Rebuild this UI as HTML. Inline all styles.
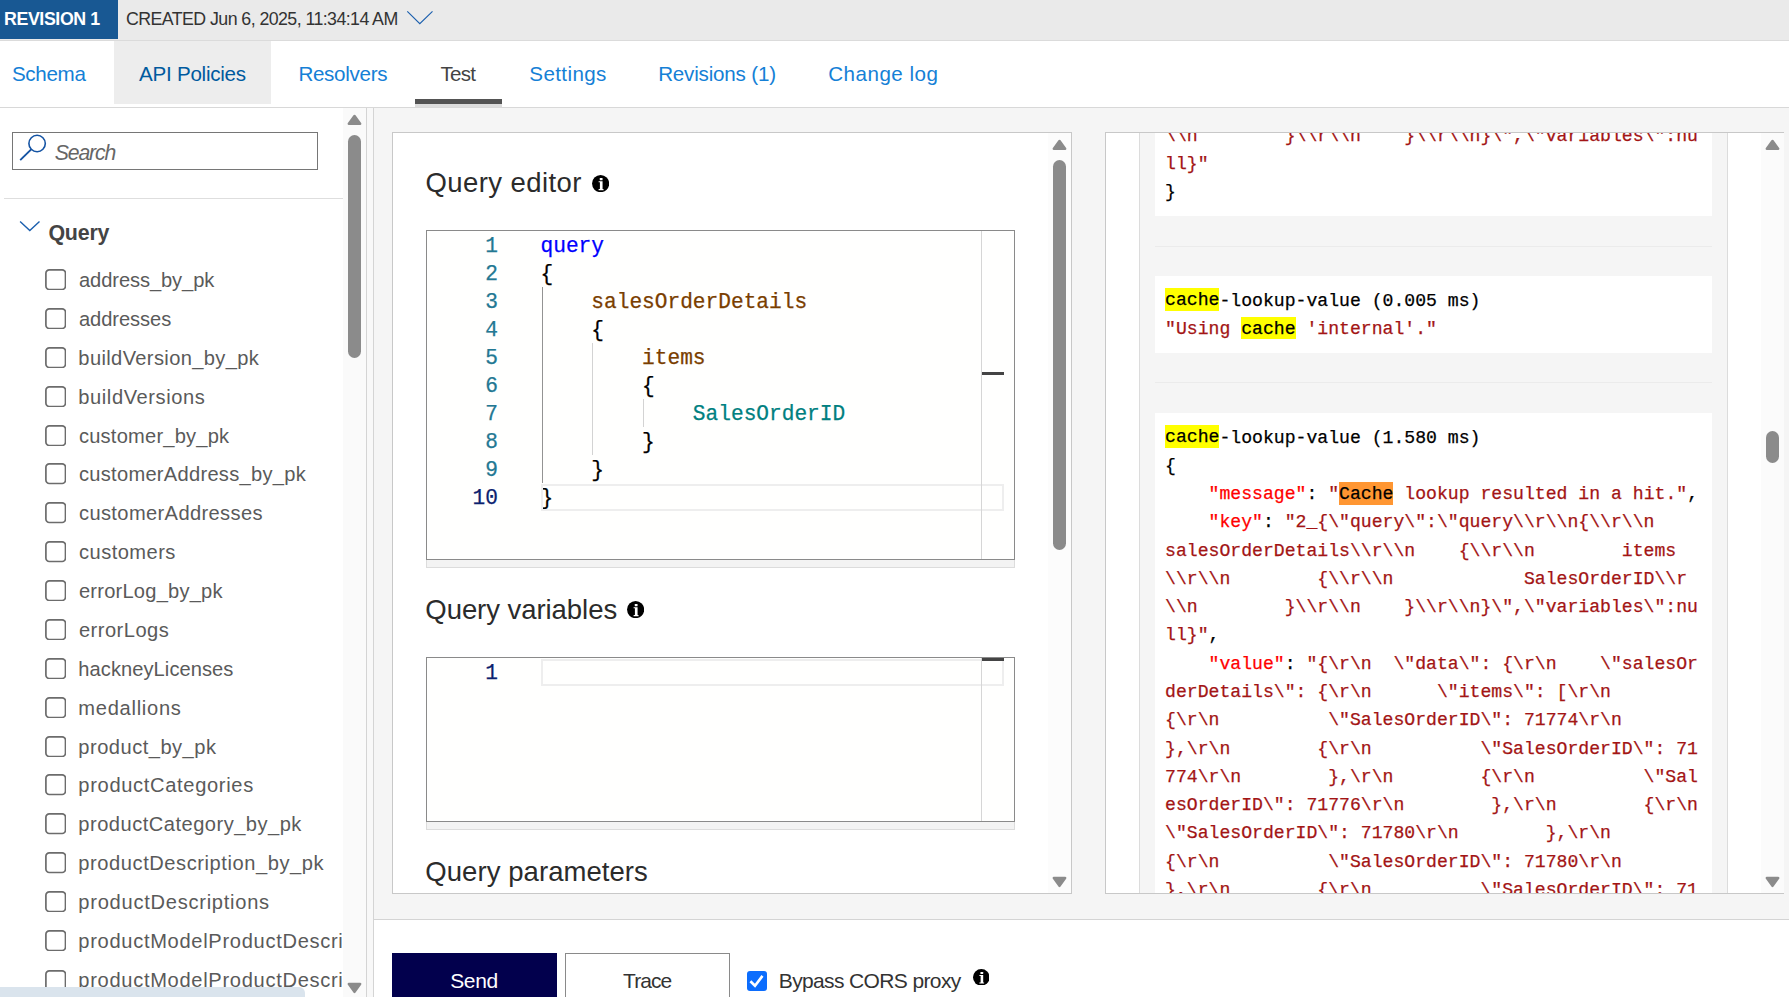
<!DOCTYPE html><html lang="en"><head><meta charset="utf-8"><title>API Management - Test</title><style>
*{box-sizing:border-box;margin:0;padding:0}
html,body{width:1789px;height:997px;overflow:hidden;background:#fff;font-family:"Liberation Sans",sans-serif}
body{position:relative}
.t{position:absolute;white-space:pre;display:block}
.abs{position:absolute}
#revbar{position:absolute;left:0;top:0;width:1789px;height:41px;background:#eaeaea;border-bottom:1px solid #dbdbdb}
#revbar .badge{position:absolute;left:0;top:0;width:118px;height:39px;background:#185893}
#tabs{position:absolute;left:0;top:41px;width:1789px;height:67px;background:#fff;border-bottom:1px solid #d8d8d8}
#tabs .hover{position:absolute;left:114px;top:0;width:157px;height:62.5px;background:#ededed}
#tabs .sel{position:absolute;left:415px;top:58px;width:87px;height:5px;background:#535353}
#tabs .sel2{position:absolute;left:415px;top:63px;width:87px;height:3px;background:#dcdcdc}
#sidebar{position:absolute;left:0;top:108px;width:343px;height:889px;background:#fff;overflow:hidden}
#sbscroll{position:absolute;left:343px;top:108px;width:23px;height:889px;background:#fafafa}
.thumb{position:absolute;background:#8b8b8b;border-radius:7px}
.vline{position:absolute;width:1px;background:#d4d4d4}
#gutter{position:absolute;left:367px;top:108px;width:6px;height:889px;background:#f8f8f8}
#main{position:absolute;left:374px;top:108px;width:1415px;height:812px;background:#f5f5f5;border-bottom:1px solid #d4d4d4;overflow:hidden}
#actions{position:absolute;left:374px;top:920px;width:1415px;height:77px;background:#fff}
.card{position:absolute;background:#fff;border:1px solid #c8c8c8;overflow:hidden}
.cb{position:absolute}
.editor{position:absolute;background:#fffffe;border:1px solid #8a8a8a;overflow:hidden}
.grip{position:absolute;height:8px;background:#f3f3f3;border:1px solid #dcdcdc;border-top:none}
.code{position:absolute;font:400 21.17px/28px "Liberation Mono",monospace;white-space:pre;color:#000;-webkit-text-stroke:0.25px}
.ln{position:absolute;font:400 21.17px/28px "Liberation Mono",monospace;white-space:pre;color:#237893;text-align:right;-webkit-text-stroke:0.25px}
.guide{position:absolute;width:1px;background:#d3d3d3}
.guide.act{background:#939393}
.curline{position:absolute;border:2px solid #eeeeee}
.blk{position:absolute;left:49px;width:557px;background:#fff;padding:10.5px 0 9.5px 10px;font:400 18.14px/28.28px "Liberation Mono",monospace;white-space:pre;color:#000;overflow:hidden;-webkit-text-stroke:0.25px}
.blk .s{color:#a31515}.blk .k{color:#ff0000}
mark{background:#ffff00;color:#000;padding:2.2px 0 0.7px}
mark.cur{background:#ff9632}
.sep{position:absolute;left:49px;width:557px;height:1px;background:#ebebeb}
.info{position:absolute;width:17px;height:17px}
</style></head><body>
<header id="revbar"><div class="badge"></div>
<span class="t" style="left:3.99px;top:7.00px;font:normal 700 17.80px/24px 'Liberation Sans', sans-serif;letter-spacing:-0.395px;color:#fff">REVISION 1</span>
<span class="t" style="left:125.97px;top:7.00px;font:normal 400 17.80px/24px 'Liberation Sans', sans-serif;letter-spacing:-0.570px;color:#333">CREATED Jun 6, 2025, 11:34:14 AM</span>
<svg class="abs" style="left:406px;top:8px" width="30" height="20" viewBox="0 0 30 20"><path d="M1.3 3.3 L13.8 15.6 L26.5 3.3" fill="none" stroke="#1b5fae" stroke-width="1.15"/></svg>
</header>
<nav id="tabs"><div class="hover"></div><div class="sel"></div><div class="sel2"></div>
<a class="t" style="left:11.96px;top:19.00px;font:normal 400 20.60px/27px 'Liberation Sans', sans-serif;letter-spacing:-0.331px;color:#1580d6">Schema</a>
<a class="t" style="left:139.00px;top:19.00px;font:normal 400 20.60px/27px 'Liberation Sans', sans-serif;letter-spacing:-0.252px;color:#005a9e">API Policies</a>
<a class="t" style="left:298.39px;top:19.00px;font:normal 400 20.60px/27px 'Liberation Sans', sans-serif;letter-spacing:-0.291px;color:#1580d6">Resolvers</a>
<a class="t" style="left:440.38px;top:19.00px;font:normal 400 20.60px/27px 'Liberation Sans', sans-serif;letter-spacing:-0.743px;color:#444">Test</a>
<a class="t" style="left:529.36px;top:19.00px;font:normal 400 20.60px/27px 'Liberation Sans', sans-serif;letter-spacing:0.365px;color:#1580d6">Settings</a>
<a class="t" style="left:658.19px;top:19.00px;font:normal 400 20.60px/27px 'Liberation Sans', sans-serif;letter-spacing:-0.194px;color:#1580d6">Revisions (1)</a>
<a class="t" style="left:828.23px;top:19.00px;font:normal 400 20.60px/27px 'Liberation Sans', sans-serif;letter-spacing:0.483px;color:#1580d6">Change log</a>
</nav>
<aside id="sidebar">
<div class="abs" style="left:12px;top:24px;width:306px;height:38px;border:1px solid #767676;background:#fff"></div>
<svg class="abs" style="left:18px;top:25px" width="30" height="30" viewBox="0 0 30 30"><circle cx="19.1" cy="10.5" r="8.2" fill="none" stroke="#1453a3" stroke-width="1.6"/><path d="M13.2 16.3 L2.2 27.2" stroke="#1453a3" stroke-width="1.9" fill="none"/></svg>
<span class="t" style="left:54.77px;top:31.00px;font:italic 400 21.20px/28px 'Liberation Sans', sans-serif;letter-spacing:-1.136px;color:#666">Search</span>
<div class="abs" style="left:4px;top:90px;width:339px;height:1px;background:#dedede"></div>
<svg class="abs" style="left:17px;top:110px" width="26" height="16" viewBox="0 0 26 16"><path d="M3.1 3.4 L12.8 12.6 L22.5 3.4" fill="none" stroke="#1b5fae" stroke-width="1.4"/></svg>
<h3 class="t" style="left:48.43px;top:111.00px;font:normal 700 21.40px/28px 'Liberation Sans', sans-serif;letter-spacing:-0.204px;color:#444">Query</h3>
<svg class="cb" style="left:45px;top:161.00px" width="21.4" height="21.4" viewBox="0 0 21.4 21.4"><rect x=".9" y=".9" width="19.6" height="19.6" rx="3.4" fill="#fff" stroke="#6c6c6c" stroke-width="1.7"/></svg>
<label class="t" style="left:78.97px;top:159.00px;font:normal 400 20.10px/26px 'Liberation Sans', sans-serif;letter-spacing:-0.076px;color:#5a5a5a">address_by_pk</label>
<svg class="cb" style="left:45px;top:199.88px" width="21.4" height="21.4" viewBox="0 0 21.4 21.4"><rect x=".9" y=".9" width="19.6" height="19.6" rx="3.4" fill="#fff" stroke="#6c6c6c" stroke-width="1.7"/></svg>
<label class="t" style="left:78.97px;top:198.00px;font:normal 400 20.10px/26px 'Liberation Sans', sans-serif;letter-spacing:-0.060px;color:#5a5a5a">addresses</label>
<svg class="cb" style="left:45px;top:238.76px" width="21.4" height="21.4" viewBox="0 0 21.4 21.4"><rect x=".9" y=".9" width="19.6" height="19.6" rx="3.4" fill="#fff" stroke="#6c6c6c" stroke-width="1.7"/></svg>
<label class="t" style="left:78.34px;top:237.00px;font:normal 400 20.10px/26px 'Liberation Sans', sans-serif;letter-spacing:0.372px;color:#5a5a5a">buildVersion_by_pk</label>
<svg class="cb" style="left:45px;top:277.64px" width="21.4" height="21.4" viewBox="0 0 21.4 21.4"><rect x=".9" y=".9" width="19.6" height="19.6" rx="3.4" fill="#fff" stroke="#6c6c6c" stroke-width="1.7"/></svg>
<label class="t" style="left:78.34px;top:276.00px;font:normal 400 20.10px/26px 'Liberation Sans', sans-serif;letter-spacing:0.577px;color:#5a5a5a">buildVersions</label>
<svg class="cb" style="left:45px;top:316.52px" width="21.4" height="21.4" viewBox="0 0 21.4 21.4"><rect x=".9" y=".9" width="19.6" height="19.6" rx="3.4" fill="#fff" stroke="#6c6c6c" stroke-width="1.7"/></svg>
<label class="t" style="left:78.97px;top:315.00px;font:normal 400 20.10px/26px 'Liberation Sans', sans-serif;letter-spacing:0.211px;color:#5a5a5a">customer_by_pk</label>
<svg class="cb" style="left:45px;top:355.40px" width="21.4" height="21.4" viewBox="0 0 21.4 21.4"><rect x=".9" y=".9" width="19.6" height="19.6" rx="3.4" fill="#fff" stroke="#6c6c6c" stroke-width="1.7"/></svg>
<label class="t" style="left:78.97px;top:353.00px;font:normal 400 20.10px/26px 'Liberation Sans', sans-serif;letter-spacing:0.280px;color:#5a5a5a">customerAddress_by_pk</label>
<svg class="cb" style="left:45px;top:394.28px" width="21.4" height="21.4" viewBox="0 0 21.4 21.4"><rect x=".9" y=".9" width="19.6" height="19.6" rx="3.4" fill="#fff" stroke="#6c6c6c" stroke-width="1.7"/></svg>
<label class="t" style="left:78.97px;top:392.00px;font:normal 400 20.10px/26px 'Liberation Sans', sans-serif;letter-spacing:0.377px;color:#5a5a5a">customerAddresses</label>
<svg class="cb" style="left:45px;top:433.16px" width="21.4" height="21.4" viewBox="0 0 21.4 21.4"><rect x=".9" y=".9" width="19.6" height="19.6" rx="3.4" fill="#fff" stroke="#6c6c6c" stroke-width="1.7"/></svg>
<label class="t" style="left:78.97px;top:431.00px;font:normal 400 20.10px/26px 'Liberation Sans', sans-serif;letter-spacing:0.469px;color:#5a5a5a">customers</label>
<svg class="cb" style="left:45px;top:472.04px" width="21.4" height="21.4" viewBox="0 0 21.4 21.4"><rect x=".9" y=".9" width="19.6" height="19.6" rx="3.4" fill="#fff" stroke="#6c6c6c" stroke-width="1.7"/></svg>
<label class="t" style="left:78.97px;top:470.00px;font:normal 400 20.10px/26px 'Liberation Sans', sans-serif;letter-spacing:0.217px;color:#5a5a5a">errorLog_by_pk</label>
<svg class="cb" style="left:45px;top:510.92px" width="21.4" height="21.4" viewBox="0 0 21.4 21.4"><rect x=".9" y=".9" width="19.6" height="19.6" rx="3.4" fill="#fff" stroke="#6c6c6c" stroke-width="1.7"/></svg>
<label class="t" style="left:78.97px;top:509.00px;font:normal 400 20.10px/26px 'Liberation Sans', sans-serif;letter-spacing:0.479px;color:#5a5a5a">errorLogs</label>
<svg class="cb" style="left:45px;top:549.80px" width="21.4" height="21.4" viewBox="0 0 21.4 21.4"><rect x=".9" y=".9" width="19.6" height="19.6" rx="3.4" fill="#fff" stroke="#6c6c6c" stroke-width="1.7"/></svg>
<label class="t" style="left:78.34px;top:548.00px;font:normal 400 20.10px/26px 'Liberation Sans', sans-serif;letter-spacing:0.064px;color:#5a5a5a">hackneyLicenses</label>
<svg class="cb" style="left:45px;top:588.68px" width="21.4" height="21.4" viewBox="0 0 21.4 21.4"><rect x=".9" y=".9" width="19.6" height="19.6" rx="3.4" fill="#fff" stroke="#6c6c6c" stroke-width="1.7"/></svg>
<label class="t" style="left:78.34px;top:587.00px;font:normal 400 20.10px/26px 'Liberation Sans', sans-serif;letter-spacing:0.722px;color:#5a5a5a">medallions</label>
<svg class="cb" style="left:45px;top:627.56px" width="21.4" height="21.4" viewBox="0 0 21.4 21.4"><rect x=".9" y=".9" width="19.6" height="19.6" rx="3.4" fill="#fff" stroke="#6c6c6c" stroke-width="1.7"/></svg>
<label class="t" style="left:78.34px;top:626.00px;font:normal 400 20.10px/26px 'Liberation Sans', sans-serif;letter-spacing:0.482px;color:#5a5a5a">product_by_pk</label>
<svg class="cb" style="left:45px;top:666.44px" width="21.4" height="21.4" viewBox="0 0 21.4 21.4"><rect x=".9" y=".9" width="19.6" height="19.6" rx="3.4" fill="#fff" stroke="#6c6c6c" stroke-width="1.7"/></svg>
<label class="t" style="left:78.34px;top:664.00px;font:normal 400 20.10px/26px 'Liberation Sans', sans-serif;letter-spacing:0.671px;color:#5a5a5a">productCategories</label>
<svg class="cb" style="left:45px;top:705.32px" width="21.4" height="21.4" viewBox="0 0 21.4 21.4"><rect x=".9" y=".9" width="19.6" height="19.6" rx="3.4" fill="#fff" stroke="#6c6c6c" stroke-width="1.7"/></svg>
<label class="t" style="left:78.34px;top:703.00px;font:normal 400 20.10px/26px 'Liberation Sans', sans-serif;letter-spacing:0.486px;color:#5a5a5a">productCategory_by_pk</label>
<svg class="cb" style="left:45px;top:744.20px" width="21.4" height="21.4" viewBox="0 0 21.4 21.4"><rect x=".9" y=".9" width="19.6" height="19.6" rx="3.4" fill="#fff" stroke="#6c6c6c" stroke-width="1.7"/></svg>
<label class="t" style="left:78.34px;top:742.00px;font:normal 400 20.10px/26px 'Liberation Sans', sans-serif;letter-spacing:0.563px;color:#5a5a5a">productDescription_by_pk</label>
<svg class="cb" style="left:45px;top:783.08px" width="21.4" height="21.4" viewBox="0 0 21.4 21.4"><rect x=".9" y=".9" width="19.6" height="19.6" rx="3.4" fill="#fff" stroke="#6c6c6c" stroke-width="1.7"/></svg>
<label class="t" style="left:78.34px;top:781.00px;font:normal 400 20.10px/26px 'Liberation Sans', sans-serif;letter-spacing:0.736px;color:#5a5a5a">productDescriptions</label>
<svg class="cb" style="left:45px;top:821.96px" width="21.4" height="21.4" viewBox="0 0 21.4 21.4"><rect x=".9" y=".9" width="19.6" height="19.6" rx="3.4" fill="#fff" stroke="#6c6c6c" stroke-width="1.7"/></svg>
<label class="t" style="left:78.34px;top:820.00px;font:normal 400 20.10px/26px 'Liberation Sans', sans-serif;letter-spacing:0.690px;color:#5a5a5a">productModelProductDescriptions</label>
<svg class="cb" style="left:45px;top:862.04px" width="21.4" height="21.4" viewBox="0 0 21.4 21.4"><rect x=".9" y=".9" width="19.6" height="19.6" rx="3.4" fill="#fff" stroke="#6c6c6c" stroke-width="1.7"/></svg>
<label class="t" style="left:78.34px;top:859.00px;font:normal 400 20.10px/26px 'Liberation Sans', sans-serif;letter-spacing:0.690px;color:#5a5a5a">productModelProductDescription_by_pk</label>
</aside>
<div id="sbscroll">
<svg class="abs" style="left:3px;top:5px" width="18" height="14" viewBox="0 0 18 14"><path d="M8.5 3 L14.1 10.7 L2.9 10.7 Z" fill="#8b8b8b" stroke="#8b8b8b" stroke-width="2.6" stroke-linejoin="round"/></svg>
<div class="thumb" style="left:5px;top:27px;width:13px;height:223px"></div>
<svg class="abs" style="left:3px;top:872px" width="18" height="14" viewBox="0 0 18 14"><path d="M8.5 11.8 L14.1 4.1 L2.9 4.1 Z" fill="#8b8b8b" stroke="#8b8b8b" stroke-width="2.6" stroke-linejoin="round"/></svg>
</div>
<div class="vline" style="left:366px;top:108px;height:889px"></div><div id="gutter"></div><div class="vline" style="left:373px;top:108px;height:889px"></div>
<main id="main">
<section class="card" style="left:18px;top:24px;width:680px;height:762px">
<h2 class="t" style="left:32.41px;top:32.00px;font:normal 400 27.50px/35px 'Liberation Sans', sans-serif;letter-spacing:0.428px;color:#2b2b2b">Query editor</h2>
<svg class="info" style="left:199.0px;top:42.2px;width:17.2px;height:17.2px" viewBox="0 0 20 20"><circle cx="10" cy="10" r="10" fill="#000"/><rect x="9" y="3.5" width="3.3" height="2.5" rx=".6" fill="#fff"/><path d="M7.7 7.3 H12.3 V16.4 H13.4 V17.6 H7.7 V16.4 H9.2 V8.5 H7.7 Z" fill="#fff"/></svg>
<div class="editor" style="left:33px;top:97px;width:589px;height:330px">
<div class="ln" style="left:11.0px;top:1.0px;width:60px;color:#237893">1</div>
<div class="code" style="left:113.50px;top:1.0px"><span style="color:#0000ff">query</span></div>
<div class="ln" style="left:11.0px;top:29.0px;width:60px;color:#237893">2</div>
<div class="code" style="left:113.50px;top:29.0px">{</div>
<div class="ln" style="left:11.0px;top:57.0px;width:60px;color:#237893">3</div>
<div class="code" style="left:113.50px;top:57.0px">    <span style="color:#7a3e00">salesOrderDetails</span></div>
<div class="ln" style="left:11.0px;top:85.0px;width:60px;color:#237893">4</div>
<div class="code" style="left:113.50px;top:85.0px">    {</div>
<div class="ln" style="left:11.0px;top:113.0px;width:60px;color:#237893">5</div>
<div class="code" style="left:113.50px;top:113.0px">        <span style="color:#7a3e00">items</span></div>
<div class="ln" style="left:11.0px;top:141.0px;width:60px;color:#237893">6</div>
<div class="code" style="left:113.50px;top:141.0px">        {</div>
<div class="ln" style="left:11.0px;top:169.0px;width:60px;color:#237893">7</div>
<div class="code" style="left:113.50px;top:169.0px">            <span style="color:#008080">SalesOrderID</span></div>
<div class="ln" style="left:11.0px;top:197.0px;width:60px;color:#237893">8</div>
<div class="code" style="left:113.50px;top:197.0px">        }</div>
<div class="ln" style="left:11.0px;top:225.0px;width:60px;color:#237893">9</div>
<div class="code" style="left:113.50px;top:225.0px">    }</div>
<div class="ln" style="left:11.0px;top:253.0px;width:60px;color:#0b216f">10</div>
<div class="code" style="left:113.50px;top:253.0px">}</div>
<div class="guide act" style="left:114.5px;top:56px;height:196px"></div>
<div class="guide" style="left:165.3px;top:112px;height:112px"></div>
<div class="guide" style="left:216.1px;top:168px;height:28px"></div>
<div class="curline" style="left:114.0px;top:252.5px;width:463px;height:27px"></div>
<div class="vline" style="left:554px;top:0;height:330px;background:#d6d6d6"></div>
<div class="abs" style="left:555px;top:141.3px;width:22px;height:3px;background:#444"></div>
</div>
<div class="grip" style="left:33px;top:427px;width:589px"></div>
<h2 class="t" style="left:32.31px;top:459.00px;font:normal 400 27.50px/35px 'Liberation Sans', sans-serif;letter-spacing:-0.052px;color:#2b2b2b">Query variables</h2>
<svg class="info" style="left:233.5px;top:468.3px;width:17.2px;height:17.2px" viewBox="0 0 20 20"><circle cx="10" cy="10" r="10" fill="#000"/><rect x="9" y="3.5" width="3.3" height="2.5" rx=".6" fill="#fff"/><path d="M7.7 7.3 H12.3 V16.4 H13.4 V17.6 H7.7 V16.4 H9.2 V8.5 H7.7 Z" fill="#fff"/></svg>
<div class="editor" style="left:33px;top:524px;width:589px;height:165px">
<div class="ln" style="left:11.0px;top:1px;width:60px;color:#0b216f">1</div>
<div class="curline" style="left:114.0px;top:1px;width:463px;height:27px"></div>
<div class="vline" style="left:554px;top:0;height:165px;background:#d6d6d6"></div>
<div class="abs" style="left:555px;top:0px;width:22px;height:3px;background:#444"></div>
</div>
<div class="grip" style="left:33px;top:689px;width:589px"></div>
<h2 class="t" style="left:32.31px;top:721.00px;font:normal 400 27.50px/35px 'Liberation Sans', sans-serif;letter-spacing:0.062px;color:#2b2b2b">Query parameters</h2>
<div class="abs" style="left:655px;top:0;width:23px;height:760px;background:#fcfcfc"></div>
<svg class="abs" style="left:658px;top:5px" width="18" height="14" viewBox="0 0 18 14"><path d="M8.5 3 L14.1 10.7 L2.9 10.7 Z" fill="#8b8b8b" stroke="#8b8b8b" stroke-width="2.6" stroke-linejoin="round"/></svg>
<div class="thumb" style="left:660px;top:27px;width:13px;height:390px"></div>
<svg class="abs" style="left:658px;top:741px" width="18" height="14" viewBox="0 0 18 14"><path d="M8.5 11.8 L14.1 4.1 L2.9 4.1 Z" fill="#8b8b8b" stroke="#8b8b8b" stroke-width="2.6" stroke-linejoin="round"/></svg>
</section>
<section class="card" style="left:731px;top:24px;width:679px;height:762px;border-right:none">
<div class="abs" style="left:33px;top:0;width:589px;height:760px;background:#f5f5f5;border-left:1px solid #dcdcdc;border-right:1px solid #dcdcdc"></div>
<pre class="blk" style="top:-21.8px;height:104.8px"><span class="s">\\n        }\\r\\n    }\\r\\n}\",\"variables\":nu
ll}"</span>
}</pre>
<div class="sep" style="top:113px"></div>
<pre class="blk" style="top:143.0px;height:76.6px"><mark>cache</mark>-lookup-value (0.005 ms)
<span class="s">"Using <mark>cache</mark> 'internal'."</span></pre>
<div class="sep" style="top:249px"></div>
<pre class="blk" style="top:280.0px;height:500.0px"><mark>cache</mark>-lookup-value (1.580 ms)
{
    <span class="k">"message"</span>: <span class="s">"<mark class="cur">Cache</mark> lookup resulted in a hit."</span>,
    <span class="k">"key"</span>: <span class="s">"2_{\"query\":\"query\\r\\n{\\r\\n
salesOrderDetails\\r\\n    {\\r\\n        items
\\r\\n        {\\r\\n            SalesOrderID\\r
\\n        }\\r\\n    }\\r\\n}\",\"variables\":nu
ll}"</span>,
    <span class="k">"value"</span>: <span class="s">"{\r\n  \"data\": {\r\n    \"salesOr
derDetails\": {\r\n      \"items\": [\r\n
{\r\n          \"SalesOrderID\": 71774\r\n
},\r\n        {\r\n          \"SalesOrderID\": 71
774\r\n        },\r\n        {\r\n          \"Sal
esOrderID\": 71776\r\n        },\r\n        {\r\n
\"SalesOrderID\": 71780\r\n        },\r\n
{\r\n          \"SalesOrderID\": 71780\r\n
},\r\n        {\r\n          \"SalesOrderID\": 71</span></pre>
<div class="abs" style="left:655px;top:0;width:23px;height:760px;background:#fbfbfb"></div>
<svg class="abs" style="left:658px;top:5px" width="18" height="14" viewBox="0 0 18 14"><path d="M8.5 3 L14.1 10.7 L2.9 10.7 Z" fill="#8b8b8b" stroke="#8b8b8b" stroke-width="2.6" stroke-linejoin="round"/></svg>
<div class="thumb" style="left:660px;top:298px;width:13px;height:32px"></div>
<svg class="abs" style="left:658px;top:741px" width="18" height="14" viewBox="0 0 18 14"><path d="M8.5 11.8 L14.1 4.1 L2.9 4.1 Z" fill="#8b8b8b" stroke="#8b8b8b" stroke-width="2.6" stroke-linejoin="round"/></svg>
</section>
</main>
<footer id="actions">
<button class="abs" style="left:18px;top:33px;width:165px;height:50px;background:#02004d;border:0">
<span class="t" style="left:58.14px;top:14.00px;font:normal 400 21.00px/27px 'Liberation Sans', sans-serif;letter-spacing:-0.336px;color:#fff">Send</span>
</button>
<button class="abs" style="left:191px;top:33px;width:165px;height:50px;background:#fff;border:1px solid #8a8a8a">
<span class="t" style="left:57.07px;top:13.00px;font:normal 400 21.00px/27px 'Liberation Sans', sans-serif;letter-spacing:-0.930px;color:#333">Trace</span>
</button>
<svg class="abs" style="left:373px;top:51px" width="20" height="20" viewBox="0 0 20 20"><rect width="20" height="20" rx="3" fill="#0c6dfd"/><path d="M3.4 10.2 L8 14.7 L15.5 4.9" fill="none" stroke="#fff" stroke-width="2.6"/></svg>
<label class="t" style="left:404.76px;top:47.00px;font:normal 400 21.00px/27px 'Liberation Sans', sans-serif;letter-spacing:-0.626px;color:#333">Bypass CORS proxy</label>
<svg class="info" style="left:598.8px;top:48.6px;width:16.6px;height:16.6px" viewBox="0 0 20 20"><circle cx="10" cy="10" r="10" fill="#000"/><rect x="9" y="3.5" width="3.3" height="2.5" rx=".6" fill="#fff"/><path d="M7.7 7.3 H12.3 V16.4 H13.4 V17.6 H7.7 V16.4 H9.2 V8.5 H7.7 Z" fill="#fff"/></svg>
</footer>
<div id="status" class="abs" style="left:0;top:987px;width:305px;height:12px;background:#dae4ed;border-top-right-radius:6px"></div>
</body></html>
